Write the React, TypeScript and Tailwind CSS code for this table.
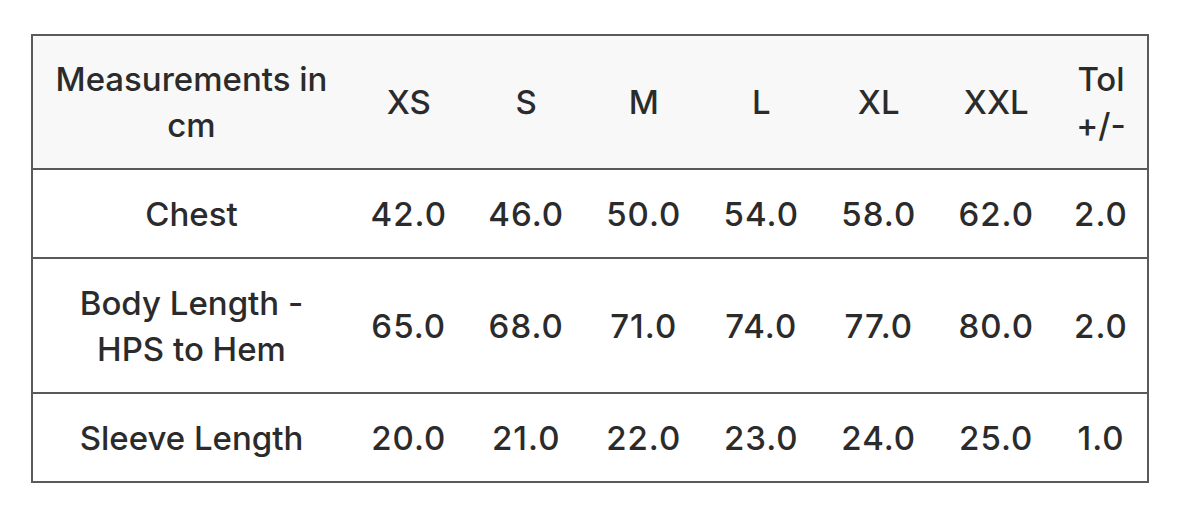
const sizes = ["XS", "S", "M", "L", "XL", "XXL"];

const rows = [
  { label: ["Chest"], values: ["42.0", "46.0", "50.0", "54.0", "58.0", "62.0"], tol: "2.0" },
  { label: ["Body Length -", "HPS to Hem"], values: ["65.0", "68.0", "71.0", "74.0", "77.0", "80.0"], tol: "2.0" },
  { label: ["Sleeve Length"], values: ["20.0", "21.0", "22.0", "23.0", "24.0", "25.0"], tol: "1.0" },
];

export default function App() {
  return (
    <div className="w-[1179px] h-[522px] bg-white pt-[34px] pl-[31px] font-['Inter',sans-serif] font-medium text-[#2b2b2b] text-[33px] leading-[46px]">
      <table className="w-[1118px] border-collapse border-2 border-[#5a5a5a] table-fixed text-center">
        <colgroup>
          <col className="w-[318px]" />
          {sizes.map((s) => (
            <col key={s} className="w-[117.5px]" />
          ))}
          <col />
        </colgroup>
        <thead>
          <tr className="bg-[#f8f8f8] h-[134px]">
            <th className="font-medium px-1">
              Measurements in
              <br />
              cm
            </th>
            {sizes.map((s) => (
              <th key={s} className="font-medium">
                {s}
              </th>
            ))}
            <th className="font-medium">
              Tol
              <br />
              +/-
            </th>
          </tr>
        </thead>
        <tbody>
          {rows.map((r, i) => (
            <tr key={i} className={`border-t-2 border-[#5a5a5a] ${r.label.length > 1 ? "h-[135px]" : "h-[89px]"}`}>
              <td className="px-1">
                {r.label.map((l, j) => (
                  <div key={j}>{l}</div>
                ))}
              </td>
              {r.values.map((v, j) => (
                <td key={j} className="tracking-[1px]">
                  {v}
                </td>
              ))}
              <td className="tracking-[1px]">{r.tol}</td>
            </tr>
          ))}
        </tbody>
      </table>
    </div>
  );
}
